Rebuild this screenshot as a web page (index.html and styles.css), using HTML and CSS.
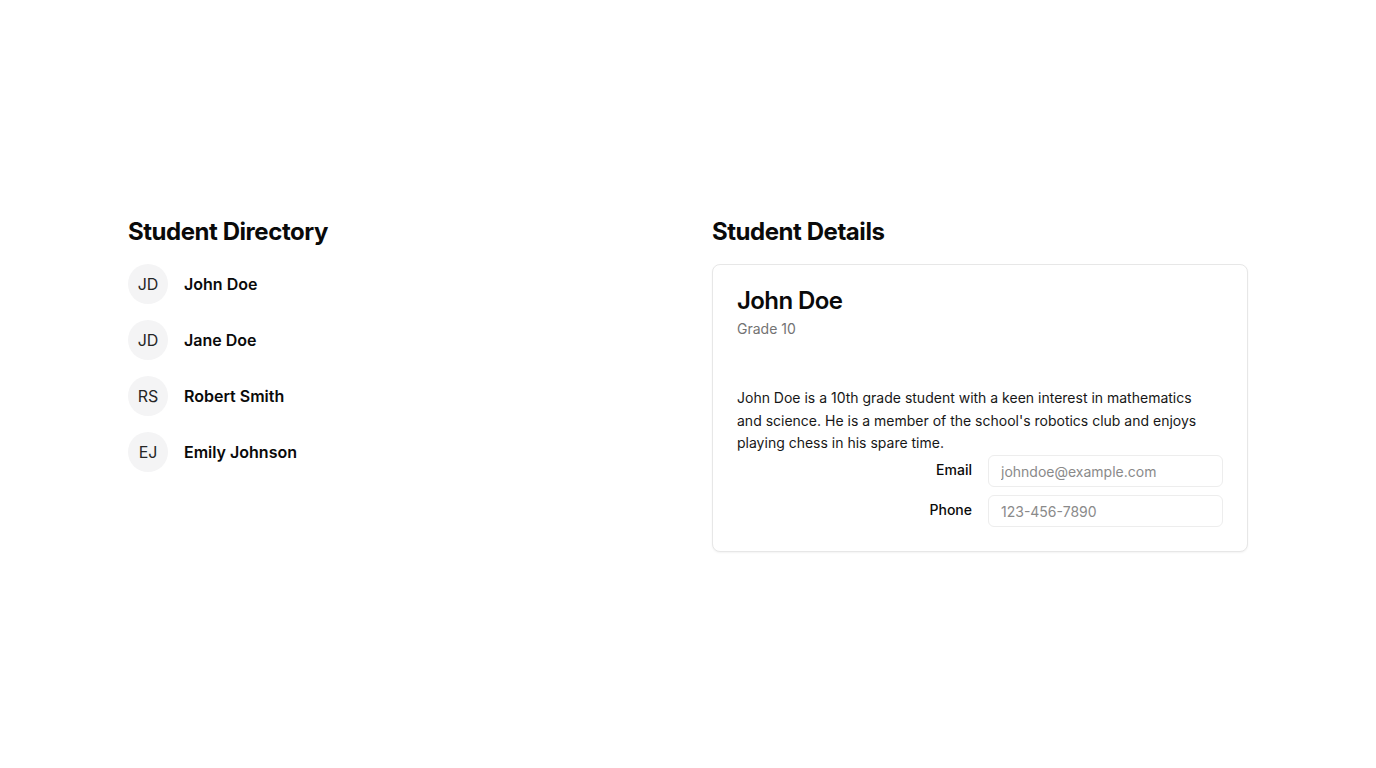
FILE: index.html
```html
<!DOCTYPE html>
<html lang="en">
<head>
<meta charset="utf-8">
<title>Students</title>
<link rel="stylesheet" href="styles.css">
</head>
<body>
<main class="page">
  <div class="layout">
    <section class="column">
      <h2 class="heading">Student Directory</h2>
      <ul class="list">
        <li class="item"><span class="avatar">JD</span><span class="name">John Doe</span></li>
        <li class="item"><span class="avatar">JD</span><span class="name">Jane Doe</span></li>
        <li class="item"><span class="avatar">RS</span><span class="name">Robert Smith</span></li>
        <li class="item"><span class="avatar">EJ</span><span class="name">Emily Johnson</span></li>
      </ul>
    </section>
    <section class="column">
      <h2 class="heading">Student Details</h2>
      <div class="card">
        <div class="card-header">
          <h3 class="card-title">John Doe</h3>
          <p class="card-desc">Grade 10</p>
        </div>
        <div class="card-content">
          <p class="bio">John Doe is a 10th grade student with a keen interest in mathematics and science. He is a member of the school's robotics club and enjoys playing chess in his spare time.</p>
          <div class="field">
            <label class="label" for="email">Email</label>
            <input class="input" id="email" type="email" placeholder="johndoe@example.com">
          </div>
          <div class="field">
            <label class="label" for="phone">Phone</label>
            <input class="input" id="phone" type="tel" placeholder="123-456-7890">
          </div>
        </div>
      </div>
    </section>
  </div>
</main>
</body>
</html>
```
FILE: styles.css
```css
* { box-sizing: border-box; }
html, body { margin: 0; padding: 0; }
body {
  font-family: Inter, "Noto Sans", sans-serif;
  color: #0a0a0a;
  background: #fff;
}
.page {
  min-height: 768px;
  display: flex;
  align-items: center;
  justify-content: center;
}
.layout {
  width: 1120px;
  display: grid;
  grid-template-columns: 1fr 1fr;
  gap: 48px;
  align-items: start;
}
.column { display: flex; flex-direction: column; gap: 16px; }
.heading {
  margin: 0;
  font-size: 24px;
  line-height: 32px;
  font-weight: 700;
  letter-spacing: -0.45px;
}
.list { list-style: none; margin: 0; padding: 0; display: flex; flex-direction: column; gap: 16px; }
.item { display: flex; align-items: center; gap: 16px; }
.avatar {
  width: 40px; height: 40px; border-radius: 50%;
  background: #f4f4f5;
  display: flex; align-items: center; justify-content: center;
  font-size: 16px; color: #262626;
}
.name { font-size: 16px; font-weight: 600; }
.card {
  border: 1px solid #e7e7e7;
  border-radius: 8px;
  box-shadow: 0 1px 2px rgba(0,0,0,0.05);
  background: #fff;
}
.card-header { padding: 24px; display: flex; flex-direction: column; gap: 6px; }
.card-title {
  margin: 0; font-size: 24px; line-height: 24px; font-weight: 600; letter-spacing: -0.6px;
}
.card-desc { margin: 0; font-size: 14px; line-height: 20px; color: #737373; }
.card-content { padding: 24px 24px 24px; display: flex; flex-direction: column; gap: 8px; }
.bio { margin: 0 0 -8px; max-width: 466px; font-size: 14px; line-height: 22.75px; color: #171717; }
.field {
  display: grid;
  grid-template-columns: repeat(4, 1fr);
  gap: 16px;
  align-items: center;
}
.label {
  grid-column: 2;
  text-align: right;
  font-size: 14px;
  line-height: 18px;
  padding-bottom: 2px;
  font-weight: 500;
}
.input {
  grid-column: span 2;
  height: 32px;
  border: 1px solid #ededed;
  border-radius: 6px;
  padding: 0 12px;
  font-family: inherit;
  font-size: 14px;
  color: #171717;
  background: #fff;
  outline: none;
}
.input::placeholder { color: #8a8a8a; }
```
